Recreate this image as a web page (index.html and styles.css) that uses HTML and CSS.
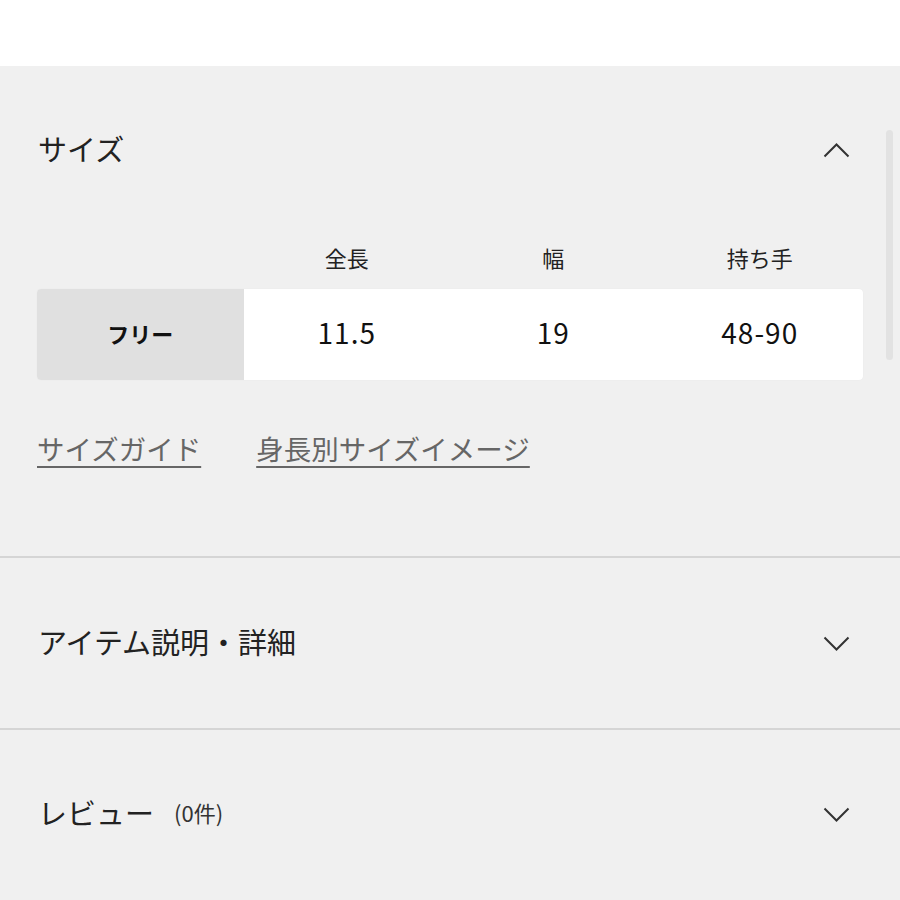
FILE: index.html
```html
<!DOCTYPE html>
<html lang="ja">
<head>
<meta charset="utf-8">
<link rel="stylesheet" href="styles.css">
</head>
<body>
<div class="top"></div>
<div class="panel">
  <div class="scrollbar"></div>
  <section class="sec sec-size">
    <div class="head">
      <h2 class="title">サイズ</h2>
      <svg class="chev" width="27" height="15" viewBox="0 0 27 15"><polyline points="1.5,13.5 13.5,1.5 25.5,13.5" fill="none" stroke="#333" stroke-width="2"/></svg>
    </div>
    <div class="cols">
      <span></span><span>全長</span><span>幅</span><span>持ち手</span>
    </div>
    <div class="row">
      <div class="cell label">フリー</div>
      <div class="cell num">11.5</div>
      <div class="cell num">19</div>
      <div class="cell num">48-90</div>
    </div>
    <div class="links">
      <a class="link" href="#">サイズガイド</a>
      <a class="link" href="#">身長別サイズイメージ</a>
    </div>
  </section>
  <section class="sec sec-closed">
    <div class="head">
      <h2 class="title">アイテム説明・詳細</h2>
      <svg class="chev" width="27" height="15" viewBox="0 0 27 15"><polyline points="1.5,1.5 13.5,13.5 25.5,1.5" fill="none" stroke="#333" stroke-width="2"/></svg>
    </div>
  </section>
  <section class="sec sec-last">
    <div class="head">
      <h2 class="title">レビュー<span class="count">(0件)</span></h2>
      <svg class="chev" width="27" height="15" viewBox="0 0 27 15"><polyline points="1.5,1.5 13.5,13.5 25.5,1.5" fill="none" stroke="#333" stroke-width="2"/></svg>
    </div>
  </section>
</div>
</body>
</html>
```

FILE: styles.css
```css
* { box-sizing: border-box; }
html, body { margin: 0; padding: 0; }
body {
  width: 900px;
  height: 900px;
  overflow: hidden;
  background: #f0f0f0;
  font-family: "Noto Sans CJK JP", "Noto Sans", sans-serif;
  color: #222;
}
.top {
  height: 66px;
  background: #fff;
}
.panel {
  position: relative;
  background: #f0f0f0;
}
.scrollbar {
  position: absolute;
  left: 886px;
  top: 64px;
  width: 7px;
  height: 230px;
  border-radius: 4px;
  background: #e2e2e2;
}
.sec {
  padding: 0 37px;
}
.sec-size {
  padding-bottom: 89px;
  border-bottom: 2px solid #d5d5d5;
}
.sec-closed {
  border-bottom: 2px solid #d5d5d5;
}
.head {
  height: 168px;
  display: flex;
  align-items: center;
  justify-content: space-between;
  padding-left: 1px;
  padding-right: 13px;
}
.sec-closed .head { height: 170px; }
.title {
  margin: 0;
  font-size: 29px;
  font-weight: 400;
  line-height: 40px;
  padding-bottom: 4px;
  color: #222;
  display: flex;
  align-items: center;
}
.count {
  font-size: 22px;
  margin-left: 20px;
  letter-spacing: 0;
  color: #333;
}
.chev { display: block; }
.cols {
  display: grid;
  grid-template-columns: repeat(4, 1fr);
  font-size: 22px;
  line-height: 30px;
  color: #222;
  text-align: center;
  margin-top: 8px;
}
.row {
  display: grid;
  grid-template-columns: repeat(4, 1fr);
  margin-top: 17px;
  height: 91px;
  background: #fff;
  border-radius: 4px;
  overflow: hidden;
  box-shadow: 0 0 1px rgba(0,0,0,0.08);
}
.cell {
  display: flex;
  align-items: center;
  justify-content: center;
}
.label {
  background: #e0e0e0;
  font-size: 22px;
  font-weight: 700;
  color: #111;
  padding-bottom: 4px;
}
.num {
  font-size: 28px;
  letter-spacing: 1px;
  color: #111;
  padding-bottom: 5px;
}
.links {
  display: flex;
  gap: 55px;
  margin-top: 49px;
  line-height: 38px;
}
.link {
  font-size: 27.5px;
  color: #666;
  text-decoration: underline;
  text-decoration-thickness: 2px;
  text-underline-offset: 6px;
}
```
